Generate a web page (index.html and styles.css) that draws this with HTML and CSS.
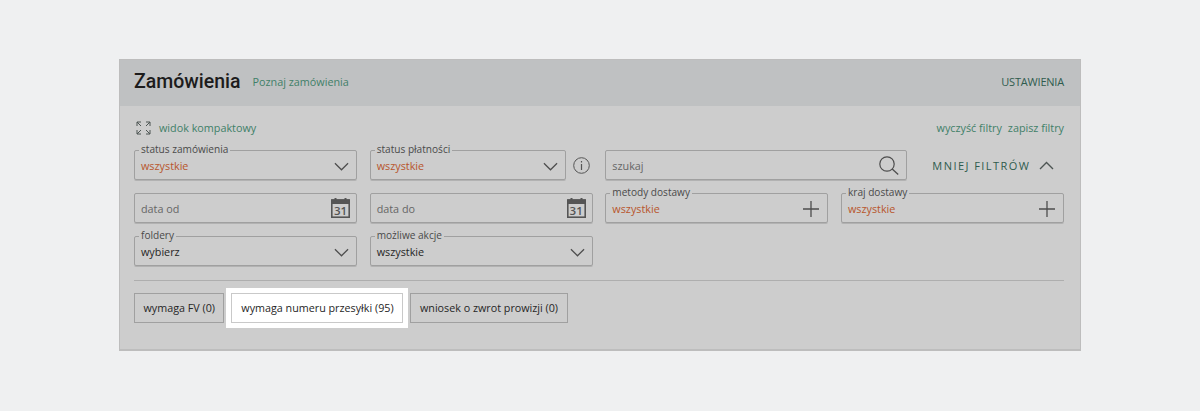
FILE: index.html
```html
<!DOCTYPE html>
<html lang="pl">
<head>
<meta charset="utf-8">
<title>Zamówienia</title>
<link rel="stylesheet" href="styles.css">
</head>
<body>
<svg class="defs" width="0" height="0" aria-hidden="true">
  <symbol id="chev" viewBox="0 0 16 9"><path d="M1 1l7 7 7-7" fill="none" stroke="#4d4d4d" stroke-width="1.3"/></symbol>
  <symbol id="plus" viewBox="0 0 16 16"><path d="M8 0v16M0 8h16" fill="none" stroke="#4d4d4d" stroke-width="1.3"/></symbol>
  <symbol id="cal" viewBox="0 0 19 20">
    <rect x="0.8" y="2" width="17.400" height="17.200" fill="none" stroke="#555" stroke-width="1.6"/>
    <rect x="0.5" y="1.5" width="18" height="4.500" fill="#555"/>
    <rect x="3.500" y="0" width="2" height="3" fill="#555"/>
    <rect x="13.500" y="0" width="2" height="3" fill="#555"/>
  </symbol>
</svg>
<main class="panel">
  <header class="head">
    <div class="head-left">
      <h1 class="title">Zamówienia</h1>
      <a class="link">Poznaj zamówienia</a>
    </div>
    <a class="settings">USTAWIENIA</a>
  </header>
  <section class="body">
    <div class="toolbar">
      <div class="compact">
        <svg class="expand" width="15" height="14" viewBox="0 0 15 14"><path d="M1 5V1h4M1 1l4 4M10 1h4v4M14 1l-4 4M1 9v4h4M1 13l4-4M10 13h4V9M14 13l-4-4" fill="none" stroke="#4d5553" stroke-width="1"/></svg>
        <a class="link">widok kompaktowy</a>
      </div>
      <div class="filters-links"><a class="link">wyczyść filtry</a><a class="link">zapisz filtry</a></div>
    </div>
    <div class="grid">
      <div class="field"><span class="legend">status zamówienia</span><span class="val red">wszystkie</span><svg class="chev"><use href="#chev"/></svg></div>
      <div class="with-info">
        <div class="field grow"><span class="legend">status płatności</span><span class="val red">wszystkie</span><svg class="chev"><use href="#chev"/></svg></div>
        <svg class="info" width="17" height="17" viewBox="0 0 17 17"><circle cx="8.500" cy="8.500" r="7.800" fill="none" stroke="#555" stroke-width="1"/><path d="M8.500 7v6M8.500 4v1.600" stroke="#555" stroke-width="1.200"/></svg>
      </div>
      <div class="search-row">
        <div class="field search"><span class="val muted">szukaj</span>
          <svg class="glass" width="20" height="19" viewBox="0 0 20 19"><circle cx="8" cy="8" r="7.200" fill="none" stroke="#4d4d4d" stroke-width="1.200"/><path d="M13.200 13l6 5.500" stroke="#4d4d4d" stroke-width="1.300"/></svg>
        </div>
        <a class="less">MNIEJ FILTRÓW<svg width="15" height="9" viewBox="0 0 15 9"><path d="M1 8l6.500-6.500L14 8" fill="none" stroke="#4d5553" stroke-width="1.400"/></svg></a>
      </div>
      <div class="field"><span class="val muted">data od</span><span class="cal"><svg width="19" height="20"><use href="#cal"/></svg><b class="day">31</b></span></div>
      <div class="field"><span class="val muted">data do</span><span class="cal"><svg width="19" height="20"><use href="#cal"/></svg><b class="day">31</b></span></div>
      <div class="field"><span class="legend">metody dostawy</span><span class="val red">wszystkie</span><svg class="plus"><use href="#plus"/></svg></div>
      <div class="field"><span class="legend">kraj dostawy</span><span class="val red">wszystkie</span><svg class="plus"><use href="#plus"/></svg></div>
      <div class="field"><span class="legend">foldery</span><span class="val dark">wybierz</span><svg class="chev"><use href="#chev"/></svg></div>
      <div class="field"><span class="legend">możliwe akcje</span><span class="val dark">wszystkie</span><svg class="chev"><use href="#chev"/></svg></div>
    </div>
    <hr class="rule">
    <div class="tabs">
      <button class="tab">wymaga FV (0)</button>
      <button class="tab active">wymaga numeru przesyłki (95)</button>
      <button class="tab">wniosek o zwrot prowizji (0)</button>
    </div>
  </section>
</main>
</body>
</html>
```
FILE: styles.css
```css
* { box-sizing: border-box; }
html, body { margin: 0; height: 411px; overflow: hidden; }
body {
  background: #eff0f1;
  font-family: "Open Sans", sans-serif;
  font-size: 11px;
  padding: 59px 119px 0;
}
.defs { position: absolute; }
.panel {
  width: 962px;
  height: 292px;
  background: #cdcdcd;
  border: 1px solid #bdbdbd;
  border-bottom-width: 2px;
}
.head {
  height: 46px;
  background: #bfc1c2;
  display: flex;
  align-items: center;
  justify-content: space-between;
  padding: 0 16px 3px 14px;
}
.head-left { display: flex; align-items: center; gap: 12px; }
.title {
  margin: 0;
  font: 500 19.500px/24px Roboto, sans-serif;
  color: #1c1c1c;
}
.link { color: #3f8068; font-size: 10.800px; line-height: 16px; white-space: nowrap; }
.settings { color: #2f5c4e; font-size: 11px; letter-spacing: -0.200px; }
.body { padding: 14px 16px 0 14px; }
.toolbar {
  display: flex;
  align-items: center;
  justify-content: space-between;
  height: 16px;
}
.compact { display: flex; align-items: center; gap: 8px; padding-left: 2px; }
.filters-links { display: flex; gap: 6px; }
.grid {
  display: grid;
  grid-template-columns: repeat(4, 223px);
  column-gap: 12.670px;
  row-gap: 13px;
  grid-auto-rows: 30px;
  margin-top: 14px;
}
.field {
  position: relative;
  display: flex;
  align-items: center;
  justify-content: space-between;
  height: 30px;
  padding: 0 6px;
  border: 1px solid #a0a0a0;
  border-radius: 2px;
  box-shadow: 0 1px 0 #b2b2b2;
  min-width: 0;
}
.legend {
  position: absolute;
  top: -9px;
  left: 4px;
  padding: 0 2px;
  background: #cdcdcd;
  color: #4a4a4a;
  font-size: 10.100px;
  line-height: 14px;
  white-space: nowrap;
}
.val { font-size: 10.800px; line-height: 16px; position: relative; top: 1px; }
.red { color: #b8552c; }
.muted { color: #666; }
.dark { color: #262626; }
.chev { width: 15px; height: 9px; flex: none; margin-right: 1px; position: relative; top: 1px; }
.plus { width: 16px; height: 16px; flex: none; margin-right: 2px; position: relative; top: 1px; }
.with-info { display: flex; align-items: center; gap: 7px; padding-right: 3px; }
.grow { flex: 1; }
.info { flex: none; }
.search-row { grid-column: span 2; display: flex; align-items: center; gap: 25px; }
.search { width: 302px; flex: none; }
.glass { flex: none; margin-right: 1px; }
.less {
  display: flex;
  align-items: center;
  gap: 9px;
  color: #2f5c4e;
  font-size: 11px;
  letter-spacing: 1.450px;
  white-space: nowrap;
}
.cal { position: relative; width: 19px; height: 20px; margin-right: 0; flex: none; }
.cal svg { display: block; }
.day {
  position: absolute;
  left: 0;
  right: 0;
  top: 6px;
  text-align: center;
  font: 600 11.500px/13px "Open Sans", sans-serif;
  color: #555;
}
.rule { border: 0; border-top: 1px solid #aeaeae; margin: 14px 0 12px; height: 0; }
.tabs { display: flex; gap: 7px; }
.tab {
  height: 30px;
  padding: 0 8.500px;
  background: #cdcdcd;
  border: 1px solid #a0a0a0;
  color: #262626;
  font: 10.750px "Open Sans", sans-serif;
  white-space: nowrap;
}
.tab.active {
  width: 172px;
  padding: 0;
  background: #fff;
  border-color: #c9c9c9;
  box-shadow: 0 0 0 5px #fff;
}
```
